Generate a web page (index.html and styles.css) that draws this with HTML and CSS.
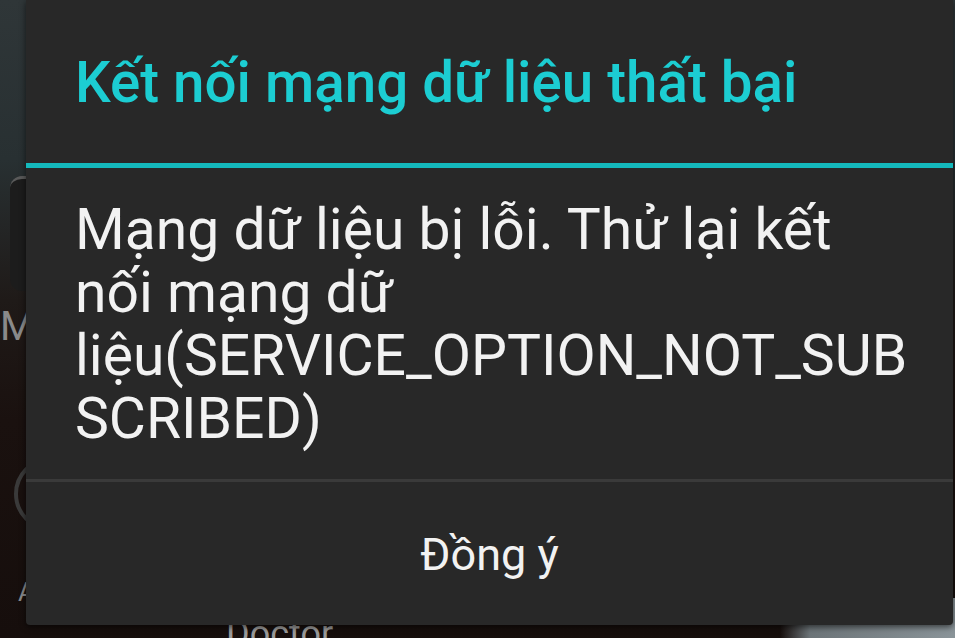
FILE: index.html
```html
<!DOCTYPE html>
<html lang="vi">
<head>
    <meta charset="UTF-8">
    <meta name="viewport" content="width=device-width, initial-scale=1.0">
    <title>Kết nối mạng dữ liệu thất bại</title>
    <link rel="stylesheet" href="styles.css">
</head>
<body>
    <div class="screen">
        <!-- home screen behind the dialog -->
        <div class="home">
            <div class="home-col">
                <div class="app-icon square"></div>
                <div class="app-label">M</div>
                <div class="app-icon round"></div>
                <div class="app-label small">A</div>
            </div>
            <div class="home-bottom">
                <div class="app-label doctor">Doctor</div>
            </div>
        </div>

        <div class="dialog">
            <div class="dialog-title">Kết nối mạng dữ liệu thất bại</div>
            <div class="title-divider"></div>
            <div class="dialog-message">Mạng dữ liệu bị lỗi. Thử lại kết nối mạng dữ liệu(SERVICE_OPTION_NOT_SUBSCRIBED)</div>
            <div class="button-divider"></div>
            <button class="dialog-button">Đồng ý</button>
        </div>
    </div>
</body>
</html>
```

FILE: styles.css
```css
/* Android holo dialog */
body {
    margin: 0;
    padding: 0;
    font-family: Roboto, "Noto Sans", sans-serif;
    background-color: #140e0c;
}
.screen {
    position: relative;
    width: 955px;
    height: 638px;
    overflow: hidden;
    background:
        linear-gradient(90deg, rgba(0,0,0,0) 0, rgba(0,0,0,0) 780px, #6c7478 810px, #8a9499 955px) bottom / 100% 40px no-repeat,
        linear-gradient(180deg, #2f3638 0, #283032 160px, #1f1a18 300px, #1a110f 420px, #160e0c 638px);
}
.home {
    display: flex;
    flex-direction: column;
    justify-content: space-between;
    height: 100%;
}
.home-col {
    display: flex;
    flex-direction: column;
    width: 26px;
    padding-top: 176px;
}
.app-icon.square {
    width: 20px;
    height: 112px;
    margin-left: 10px;
    border-radius: 12px 0 0 12px;
    border-top: 3px solid #5a5a5a;
    background-color: #1c1c1c;
}
.app-label {
    color: #8a8a8a;
    font-size: 40px;
    line-height: 40px;
}
.home-col .app-label {
    margin-top: 16px;
}
.home-col .app-label.small {
    font-size: 26px;
    line-height: 26px;
    margin-left: 18px;
    margin-top: 48px;
}
.app-icon.round {
    width: 74px;
    height: 74px;
    margin-left: 14px;
    margin-top: 110px;
    border-radius: 50%;
    border: 4px solid #3a3a3a;
    box-sizing: border-box;
}
.home-bottom {
    padding-left: 226px;
    height: 24px;
}
.app-label.doctor {
    font-size: 36px;
    line-height: 40px;
    color: #9a9a9a;
}
.dialog {
    position: absolute;
    left: 26px;
    top: 0;
    width: 927px;
    height: 625px;
    display: flex;
    flex-direction: column;
    background-color: #282828;
    box-shadow: 0 2px 6px rgba(0,0,0,0.6);
    border-radius: 0 0 4px 4px;
}
.dialog-title {
    padding: 53px 49px 50px;
    height: 60px;
    line-height: 60px;
    font-size: 56.5px;
    font-weight: 500;
    color: #1ccdd2;
    white-space: nowrap;
}
.title-divider {
    height: 5px;
    background-color: #14b9bc;
}
.dialog-message {
    padding: 30px 36px 0 49px;
    height: 281px;
    font-size: 57px;
    line-height: 63px;
    color: #f2f2f2;
    overflow-wrap: anywhere;
}
.button-divider {
    height: 3px;
    background-color: #3a3a3a;
}
.dialog-button {
    flex: 1;
    border: none;
    background: transparent;
    font-family: Roboto, "Noto Sans", sans-serif;
    font-size: 45px;
    color: #f2f2f2;
    padding: 2px 0 0;
}
```
